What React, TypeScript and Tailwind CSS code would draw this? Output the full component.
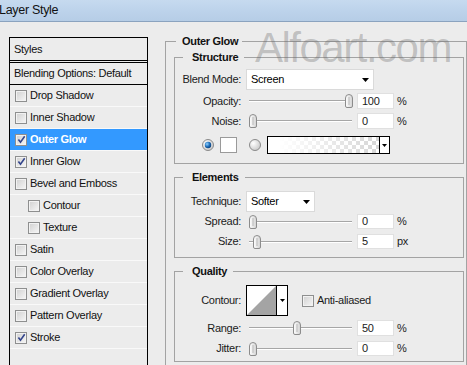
import React from "react";

function CheckBox({ checked }: { checked?: boolean }) {
  return (
    <span className="flex h-[12px] w-[12px] shrink-0 items-center justify-center border border-[#8e8f8f] bg-gradient-to-br from-[#d0d0d0] to-[#f7f7f7] shadow-[inset_0_0_0_1px_#f2f2f2]">
      {checked && (
        <svg width="9" height="9" viewBox="0 0 9 9">
          <path d="M1.4 4.4 L3.5 7.2 L7.7 1.2" stroke="#34458c" strokeWidth="1.6" fill="none" />
        </svg>
      )}
    </span>
  );
}

function StyleRow({ label, checked, active, indent }: { label: string; checked?: boolean; active?: boolean; indent?: boolean }) {
  return (
    <div
      className={`flex h-[22px] items-center border-b border-[#f9f9f9] ${indent ? "pl-[18px]" : "pl-[5px]"} ${
        active ? "bg-[#3399ff] font-bold text-white" : "text-[#111]"
      }`}
    >
      <CheckBox checked={checked} />
      <span className="ml-[3px]">{label}</span>
    </div>
  );
}

function Arrow() {
  return (
    <svg width="7" height="4" viewBox="0 0 7 4" className="shrink-0">
      <polygon points="0,0 7,0 3.5,4" fill="#000" />
    </svg>
  );
}

function Label({ text }: { text: string }) {
  return <span className="w-[66px] shrink-0 text-right text-[#1b1b1b]">{text}</span>;
}

function Select({ value, widthClass }: { value: string; widthClass: string }) {
  return (
    <div className={`ml-[5px] flex h-full items-center justify-between border border-[#dadada] bg-white pl-[4px] pr-[4px] ${widthClass}`}>
      <span>{value}</span>
      <Arrow />
    </div>
  );
}

function Slider({ offset }: { offset: number }) {
  return (
    <div className="relative ml-[5px] h-full w-[106px] shrink-0">
      <div className="absolute left-[3px] right-0 top-[7px] h-[2px] border-t border-[#a6a6a6] bg-white" />
      <svg className="absolute top-[1px]" style={{ left: 3 + offset }} width="8" height="14" viewBox="0 0 8 14">
        <defs>
          <linearGradient id="thumbg" x1="0" y1="0" x2="1" y2="0">
            <stop offset="0" stopColor="#ffffff" />
            <stop offset="1" stopColor="#d2d2d2" />
          </linearGradient>
        </defs>
        <path d="M0.5 4 Q0.5 0.5 4 0.5 Q7.5 0.5 7.5 4 V12 Q7.5 13.5 6 13.5 H2 Q0.5 13.5 0.5 12 Z" fill="url(#thumbg)" stroke="#8c8c8c" />
        <line x1="4" y1="3" x2="4" y2="11" stroke="#b8b8b8" />
      </svg>
    </div>
  );
}

function NumField({ value, unit }: { value: string; unit: string }) {
  return (
    <>
      <div className="ml-[5px] flex h-full w-[37px] shrink-0 items-center border border-[#e0e0e0] bg-white pl-[4px] text-[#1b1b1b]">{value}</div>
      <span className="ml-[3px] text-[#1b1b1b]">{unit}</span>
    </>
  );
}

function SliderRow({ label, offset, value, unit, hClass, mtClass }: { label: string; offset: number; value: string; unit: string; hClass: string; mtClass: string }) {
  return (
    <div className={`flex items-center ${hClass} ${mtClass}`}>
      <Label text={label} />
      <Slider offset={offset} />
      <NumField value={value} unit={unit} />
    </div>
  );
}

function Group({ title, inner, className, children }: { title: string; inner?: boolean; className: string; children?: React.ReactNode }) {
  return (
    <div className={`relative border border-[#a3a3a3] ${className}`}>
      <span
        className={`absolute -top-[8px] bg-[#ececec] font-bold leading-[14px] text-[#111] ${
          inner ? "left-[8px] pl-[9px] pr-[6px]" : "left-[10px] pl-[6px] pr-[4px]"
        }`}
      >
        {title}
      </span>
      {children}
    </div>
  );
}

function Radio({ checked }: { checked?: boolean }) {
  return (
    <svg width="12" height="12" viewBox="0 0 12 12" className="shrink-0">
      <defs>
        <radialGradient id="rbg" cx="0.35" cy="0.35" r="0.7">
          <stop offset="0" stopColor="#ffffff" />
          <stop offset="1" stopColor="#c9c9c9" />
        </radialGradient>
        <radialGradient id="rdot" cx="0.35" cy="0.35" r="0.7">
          <stop offset="0" stopColor="#8fd0ff" />
          <stop offset="0.6" stopColor="#1c6cb8" />
          <stop offset="1" stopColor="#0e3f78" />
        </radialGradient>
      </defs>
      <circle cx="6" cy="6" r="5.5" fill="url(#rbg)" stroke="#8a8a8a" />
      {checked && <circle cx="6" cy="6" r="3.2" fill="url(#rdot)" />}
    </svg>
  );
}

export default function App() {
  return (
    <div className="relative h-[365px] w-[467px] overflow-hidden bg-[#ececec] font-['Liberation_Sans',Arial,sans-serif] text-[11px] leading-[13px] tracking-[-0.3px]">
      {/* title bar */}
      <div className="flex h-[22px] items-center border-b border-[#8ba3bf] bg-gradient-to-b from-[#c6daef] via-[#bdd3eb] to-[#b6cde6]">
        <span className="-ml-[1px] text-[12.5px] text-[#111]">Layer Style</span>
      </div>

      <div className="flex">
        {/* left list */}
        <div className="ml-[9px] mt-[15px] h-[340px] w-[139px] shrink-0 border border-black">
          <div className="flex h-[23px] items-center border-b border-black pl-[4px] text-[#111]">Styles</div>
          <div className="mt-[1px] flex h-[23px] items-center border-y border-black pl-[4px] text-[#111]">Blending Options: Default</div>
          <StyleRow label="Drop Shadow" />
          <StyleRow label="Inner Shadow" />
          <StyleRow label="Outer Glow" checked active />
          <StyleRow label="Inner Glow" checked />
          <StyleRow label="Bevel and Emboss" />
          <StyleRow label="Contour" indent />
          <StyleRow label="Texture" indent />
          <StyleRow label="Satin" />
          <StyleRow label="Color Overlay" />
          <StyleRow label="Gradient Overlay" />
          <StyleRow label="Pattern Overlay" />
          <StyleRow label="Stroke" checked />
        </div>

        {/* right panel */}
        <Group title="Outer Glow" className="ml-[17px] mt-[19px] h-[340px] w-[302px] shrink-0 pl-[8px] pt-[15px]">
          <Group title="Structure" inner className="h-[107px] w-[290px] pt-[11px]">
            <div className="flex h-[21px] items-center">
              <Label text="Blend Mode:" />
              <Select value="Screen" widthClass="w-[128px]" />
            </div>
            <SliderRow label="Opacity:" offset={96} value="100" unit="%" hClass="h-[16px]" mtClass="mt-[3px]" />
            <SliderRow label="Noise:" offset={0} value="0" unit="%" hClass="h-[16px]" mtClass="mt-[4px]" />
            <div className="mt-[7px] flex h-[18px] items-center pl-[27px]">
              <Radio checked />
              <div className="ml-[6px] h-[16px] w-[17px] border border-[#9a9a9a] bg-white" />
              <div className="ml-[12px]">
                <Radio />
              </div>
              <div className="ml-[6px] flex h-[18px] w-[123px] border border-black">
                <div className="h-full flex-1 bg-[conic-gradient(#d6d6d6_25%,#ffffff_0_50%,#d6d6d6_0_75%,#ffffff_0)] bg-[length:8px_8px]">
                  <div className="h-full w-full bg-gradient-to-r from-white from-10% to-transparent" />
                </div>
                <div className="flex w-[10px] items-center justify-center border-l border-black bg-white">
                  <svg width="5" height="3" viewBox="0 0 5 3">
                    <polygon points="0,0 5,0 2.5,3" fill="#000" />
                  </svg>
                </div>
              </div>
            </div>
          </Group>

          <Group title="Elements" inner className="mt-[13px] h-[81px] w-[290px] pt-[13px]">
            <div className="flex h-[21px] items-center">
              <Label text="Technique:" />
              <Select value="Softer" widthClass="w-[69px]" />
            </div>
            <SliderRow label="Spread:" offset={0} value="0" unit="%" hClass="h-[15px]" mtClass="mt-[2px]" />
            <SliderRow label="Size:" offset={4} value="5" unit="px" hClass="h-[15px]" mtClass="mt-[5px]" />
          </Group>

          <Group title="Quality" inner className="mt-[13px] h-[91px] w-[290px] pt-[13px]">
            <div className="flex h-[31px] items-center">
              <Label text="Contour:" />
              <div className="ml-[5px] flex h-[31px] w-[42px] shrink-0 border border-black bg-white">
                <svg className="h-full flex-1" viewBox="0 0 29 29" preserveAspectRatio="none">
                  <polygon points="0,29 29,0 29,29" fill="#a4a4a4" />
                </svg>
                <div className="flex w-[11px] items-center justify-center border-l border-black">
                  <svg width="5" height="3" viewBox="0 0 5 3">
                    <polygon points="0,0 5,0 2.5,3" fill="#000" />
                  </svg>
                </div>
              </div>
              <div className="ml-[14px] flex items-center">
                <CheckBox />
                <span className="ml-[3px] text-[#1b1b1b]">Anti-aliased</span>
              </div>
            </div>
            <SliderRow label="Range:" offset={44} value="50" unit="%" hClass="h-[16px]" mtClass="mt-[4px]" />
            <SliderRow label="Jitter:" offset={0} value="0" unit="%" hClass="h-[15px]" mtClass="mt-[5px]" />
          </Group>
        </Group>
      </div>

      {/* watermark */}
      <div className="pointer-events-none absolute left-[255px] top-[27px] font-['Liberation_Sans',Arial,sans-serif] text-[42px] leading-[42px] tracking-[-1.5px] text-[rgba(100,100,100,0.33)]">
        Alfoart.com
      </div>
    </div>
  );
}
